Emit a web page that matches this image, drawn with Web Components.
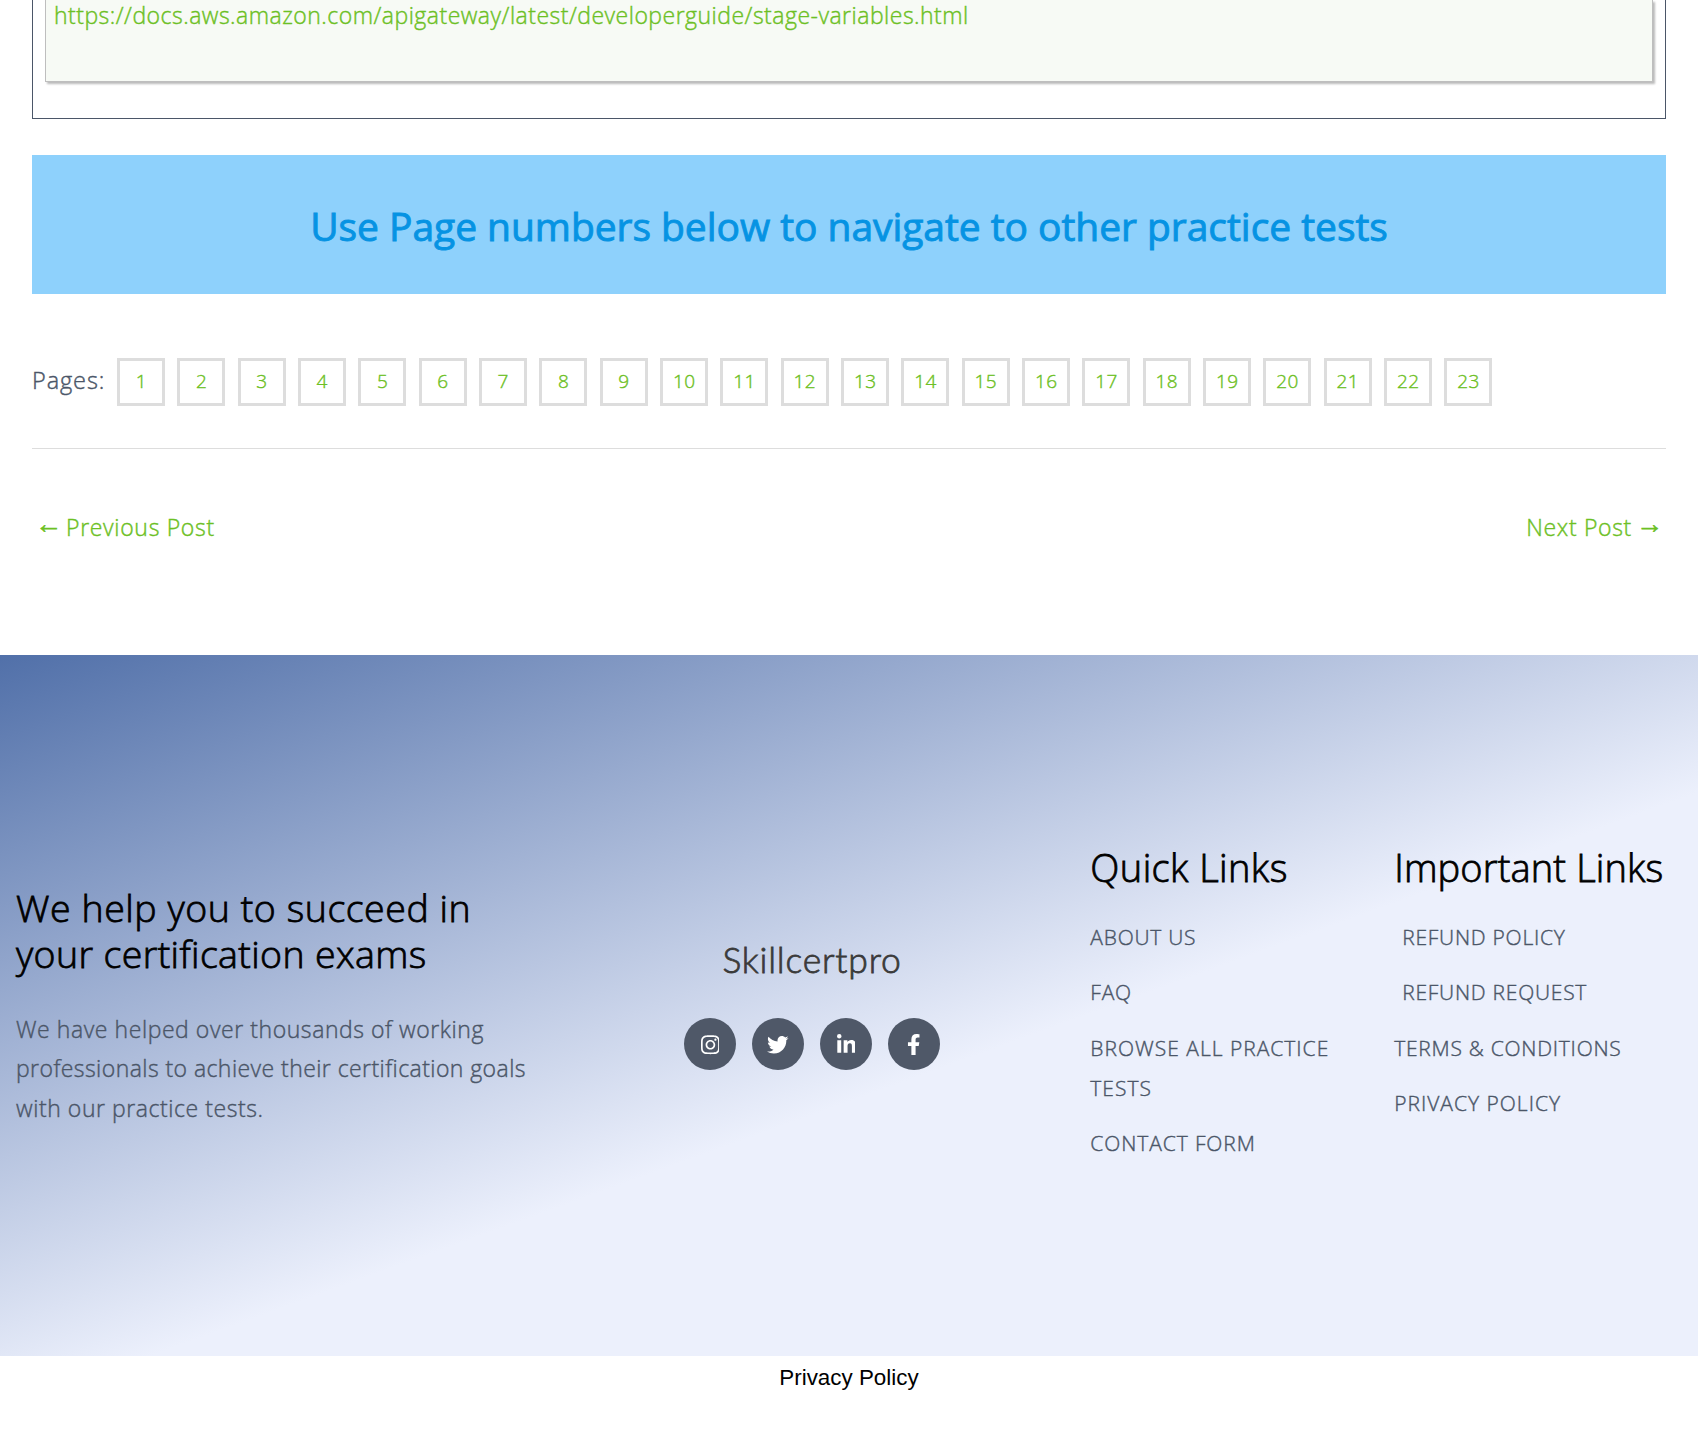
<!DOCTYPE html>
<html lang="en"><head><meta charset="utf-8"><title>Skillcertpro</title>
<style>
body{margin:0;background:#fff;font-family:"Open Sans","Noto Sans",sans-serif;font-weight:300;font-size:23px;color:#4b5668;letter-spacing:.5px;-webkit-text-stroke:.4px;--link:#6cc024}
</style></head><body>
<practice-page></practice-page>
<script>
const define=(name,html,setup)=>customElements.define(name,class extends HTMLElement{
  connectedCallback(){
    if(this.shadowRoot)return;
    const t=document.createElement('template');t.innerHTML=html;
    this.attachShadow({mode:'open'}).append(t.content.cloneNode(true));
    if(setup)setup(this,this.shadowRoot);
  }});

define('reference-box',`<style>
:host{display:block;border:1px solid #4b5668;border-top:0;padding:0 12px 36px}
div{box-sizing:border-box;height:82px;border:1px solid #bebebe;border-top:0;background:#f7faf5;box-shadow:2px 2px 2px #bbb;padding-left:8px;line-height:30px;color:var(--link);letter-spacing:.485px}
</style><div><slot></slot></div>`);

define('notice-banner',`<style>
:host{display:flex;align-items:center;justify-content:center;box-sizing:border-box;height:139px;margin-top:36px;padding-top:2px;background:#8ed1fc;color:#0693e3;font-size:39px;font-weight:400;line-height:56px;letter-spacing:-.05px;-webkit-text-stroke:.9px}
</style><span><slot></slot></span>`);

define('page-links',`<style>
:host{display:flex;margin-top:64px;height:48px;align-items:flex-start}
.label{line-height:44px;width:85px;flex:none;font-size:23.5px;letter-spacing:.9px}
.list{display:flex;gap:12.34px}
a{box-sizing:border-box;width:48px;height:48px;border:3px solid #ddd;line-height:40px;font-size:19px;text-align:center;color:var(--link);letter-spacing:.4px;padding-left:.5px}
</style><span class="label">Pages:</span><div class="list"></div>`,(h,r)=>{
  const list=r.querySelector('.list');
  for(let i=1;i<=+h.getAttribute('count');i++){const a=document.createElement('a');a.textContent=i;list.append(a)}
});

define('post-nav',`<style>
:host{display:flex;justify-content:space-between;border-top:1px solid #ddd;margin-top:42px;padding:57px 3px 0;line-height:42px;color:var(--link);height:149px;letter-spacing:.68px}
span{display:flex;gap:4px}
i{font:27px/36px "Liberation Sans",sans-serif;letter-spacing:0;width:27px;-webkit-text-stroke:.6px}
</style><span><i>←</i>Previous Post</span><span>Next Post<i>→</i></span>`);

define('social-icon',`<style>
:host{display:flex;width:52px;height:52px;border-radius:50%;background:#4f5868;align-items:center;justify-content:center}
svg{height:21.5px;fill:#fff;display:block;margin:1px 0 0 1px}
</style><svg><path/></svg>`,(h,r)=>{
  const I={
instagram:[448,'M224.1 141c-63.6 0-114.900 51.300-114.900 114.900s51.300 114.900 114.900 114.900S339 319.500 339 255.900 287.700 141 224.100 141zm0 189.600c-41.100 0-74.700-33.500-74.700-74.700s33.500-74.700 74.700-74.700 74.700 33.500 74.700 74.700-33.600 74.700-74.700 74.700zm146.400-194.300c0 14.900-12 26.800-26.800 26.800-14.900 0-26.800-12-26.800-26.800s12-26.800 26.800-26.800 26.800 12 26.800 26.800zm76.100 27.200c-1.700-35.900-9.900-67.700-36.200-93.900-26.200-26.200-58-34.400-93.900-36.200-37-2.100-147.900-2.100-184.900 0-35.800 1.700-67.600 9.900-93.900 36.100s-34.400 58-36.200 93.900c-2.100 37-2.100 147.900 0 184.900 1.700 35.900 9.900 67.700 36.200 93.900s58 34.400 93.900 36.200c37 2.100 147.900 2.100 184.900 0 35.900-1.700 67.700-9.900 93.900-36.200 26.200-26.200 34.400-58 36.200-93.900 2.100-37 2.100-147.800 0-184.800zM398.800 388c-7.800 19.600-22.900 34.700-42.600 42.600-29.500 11.700-99.500 9-132.100 9s-102.700 2.600-132.100-9c-19.600-7.800-34.700-22.900-42.600-42.600-11.700-29.500-9-99.500-9-132.100s-2.600-102.700 9-132.100c7.800-19.600 22.900-34.700 42.600-42.600 29.500-11.700 99.500-9 132.100-9s102.700-2.600 132.100 9c19.600 7.800 34.700 22.900 42.600 42.600 11.700 29.500 9 99.500 9 132.100s2.700 102.700-9 132.100z'],
twitter:[512,'M459.37 151.716c.325 4.548.325 9.097.325 13.645 0 138.72-105.583 298.558-298.558 298.558-59.452 0-114.68-17.219-161.137-47.106 8.447.974 16.568 1.299 25.34 1.299 49.055 0 94.213-16.568 130.274-44.832-46.132-.975-84.792-31.188-98.112-72.772 6.498.974 12.995 1.624 19.818 1.624 9.421 0 18.843-1.300 27.614-3.573-48.081-9.747-84.143-51.980-84.143-102.985v-1.299c13.969 7.797 30.214 12.670 47.431 13.319-28.264-18.843-46.781-51.005-46.781-87.391 0-19.492 5.197-37.360 14.294-52.954 51.655 63.675 129.300 105.258 216.365 109.807-1.624-7.797-2.599-15.918-2.599-24.040 0-57.828 46.782-104.934 104.934-104.934 30.213 0 57.502 12.670 76.670 33.137 23.715-4.548 46.456-13.320 66.599-25.340-7.798 24.366-24.366 44.833-46.132 57.827 21.117-2.273 41.584-8.122 60.426-16.243-14.292 20.791-32.161 39.308-52.628 54.253z'],
linkedin:[448,'M100.280 448H7.400V148.900h92.880zM53.790 108.100C24.090 108.100 0 83.500 0 53.800a53.790 53.790 0 0 1 107.580 0c0 29.700-24.100 54.300-53.790 54.300zM447.900 448h-92.680V302.400c0-34.700-.7-79.200-48.290-79.200-48.290 0-55.690 37.700-55.690 76.700V448h-92.780V148.900h89.080v40.800h1.300c12.400-23.500 42.690-48.300 87.880-48.300 94 0 111.280 61.900 111.280 142.300V448z'],
facebook:[320,'M279.140 288l14.220-92.660h-88.910v-60.130c0-25.350 12.420-50.060 52.240-50.060h40.420V6.260S260.430 0 225.360 0c-73.220 0-121.080 44.380-121.080 124.720v70.620H22.890V288h81.390v224h100.170V288z']};
  const [w,d]=I[h.getAttribute('name')];
  r.querySelector('svg').setAttribute('viewBox',`0 0 ${w} 512`);
  r.querySelector('path').setAttribute('d',d);
});

define('footer-about',`<style>
:host{display:block;width:517px;padding-top:230px;white-space:nowrap}
h2{margin:0 0 32.5px;font-size:37.5px;font-weight:300;line-height:46px;color:#000;letter-spacing:.55px;-webkit-text-stroke:.8px}
p{margin:0;line-height:39.65px;letter-spacing:.56px}
.a{letter-spacing:.37px}.b{letter-spacing:.43px}
</style><h2>We help you to succeed in<br><span class="a">your certification exams</span></h2>
<p>We have helped over thousands of working<br><span class="b">professionals to achieve their certification goals</span><br>with our practice tests.</p>`);

define('footer-social',`<style>
:host{display:flex;flex-direction:column;align-items:center;width:558px;padding-top:283px}
b{font:300 35.5px/44px Lato,sans-serif;color:#3a3a3a;letter-spacing:.8px;-webkit-text-stroke:.8px;padding-left:1px}
div{display:flex;gap:16px;margin-top:36px}
</style><b>Skillcertpro</b><div><social-icon name="instagram"></social-icon><social-icon name="twitter"></social-icon><social-icon name="linkedin"></social-icon><social-icon name="facebook"></social-icon></div>`);

define('link-column',`<style>
:host{display:block;padding-top:189px;width:304px;white-space:nowrap}
h2{margin:0 0 27px;font-size:38px;font-weight:300;line-height:46px;color:#000;letter-spacing:var(--head-spacing,.4px);-webkit-text-stroke:.8px}
div{display:flex;flex-direction:column;gap:15.4px;font-size:21px;line-height:40px;letter-spacing:.75px;-webkit-text-stroke:.4px}
</style><h2></h2><div><slot></slot></div>`,(h,r)=>{r.querySelector('h2').textContent=h.getAttribute('heading')});

define('site-footer',`<style>
:host{display:flex;box-sizing:border-box;height:701px;padding-left:16px;background:linear-gradient(160deg,#5170a9 0%,#ecf0fc 57.3%)}
.in{padding-left:8px}.w{letter-spacing:1px}.c{letter-spacing:.9px}
.important{--head-spacing:.13px}
</style>
<footer-about></footer-about><footer-social></footer-social>
<link-column heading="Quick Links"><span>ABOUT US</span><span>FAQ</span><span class="w">BROWSE ALL PRACTICE<br>TESTS</span><span class="c">CONTACT FORM</span></link-column>
<link-column class="important" heading="Important Links"><span class="in">REFUND POLICY</span><span class="in">REFUND REQUEST</span><span>TERMS &amp; CONDITIONS</span><span class="w">PRIVACY POLICY</span></link-column>`);

define('privacy-bar',`<style>
:host{display:block;height:76px;padding-top:7px;text-align:center;font:22.4px/30px "Liberation Sans",Arial,sans-serif;color:#000;letter-spacing:0;-webkit-text-stroke:0}
</style><slot></slot>`);

define('practice-page',`<style>
:host{display:block;height:1439px;overflow:hidden}
main{padding:0 32px}
</style>
<main>
<reference-box>https://docs.aws.amazon.com/apigateway/latest/developerguide/stage-variables.html</reference-box>
<notice-banner>Use Page numbers below to navigate to other practice tests</notice-banner>
<page-links count="23"></page-links>
<post-nav></post-nav>
</main>
<site-footer></site-footer>
<privacy-bar>Privacy Policy</privacy-bar>`);
</script></body></html>
